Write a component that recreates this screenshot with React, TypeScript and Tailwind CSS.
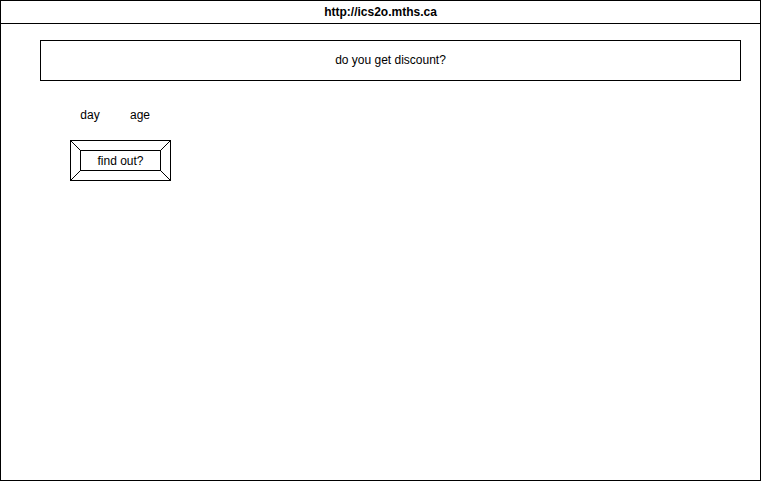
import React from "react";

export default function App() {
  return (
    <div className="w-[761px] h-[481px] bg-white border border-black flex flex-col text-[12px] text-black" style={{ fontFamily: '"Liberation Sans", Arial, sans-serif' }}>
      <div className="h-[23px] shrink-0 border-b border-black flex items-center justify-center font-bold leading-[14px]">
        http://ics2o.mths.ca
      </div>
      <div className="flex flex-col pl-[39px] pt-[16px]">
        <div className="w-[701px] h-[41px] border border-black flex items-center justify-center leading-[14px] pb-[2px]">
          do you get discount?
        </div>
        <div className="flex ml-[30px] mt-[27px] leading-[14px] gap-[10px]">
          <div className="w-[40px] text-center">day</div>
          <div className="w-[40px] text-center">age</div>
        </div>
        <div className="relative ml-[30px] mt-[18px] w-[101px] h-[41px] border border-black flex items-center justify-center">
          <svg className="absolute left-[-1px] top-[-1px]" width="101" height="41" viewBox="0 0 101 41">
            <line x1="0.5" y1="0.5" x2="10.5" y2="10.5" stroke="black" strokeWidth="1" />
            <line x1="100.5" y1="0.5" x2="90.5" y2="10.5" stroke="black" strokeWidth="1" />
            <line x1="0.5" y1="40.5" x2="10.5" y2="30.5" stroke="black" strokeWidth="1" />
            <line x1="100.5" y1="40.5" x2="90.5" y2="30.5" stroke="black" strokeWidth="1" />
          </svg>
          <div className="w-[81px] h-[21px] border border-black flex items-center justify-center leading-[14px]">
            find out?
          </div>
        </div>
      </div>
    </div>
  );
}
